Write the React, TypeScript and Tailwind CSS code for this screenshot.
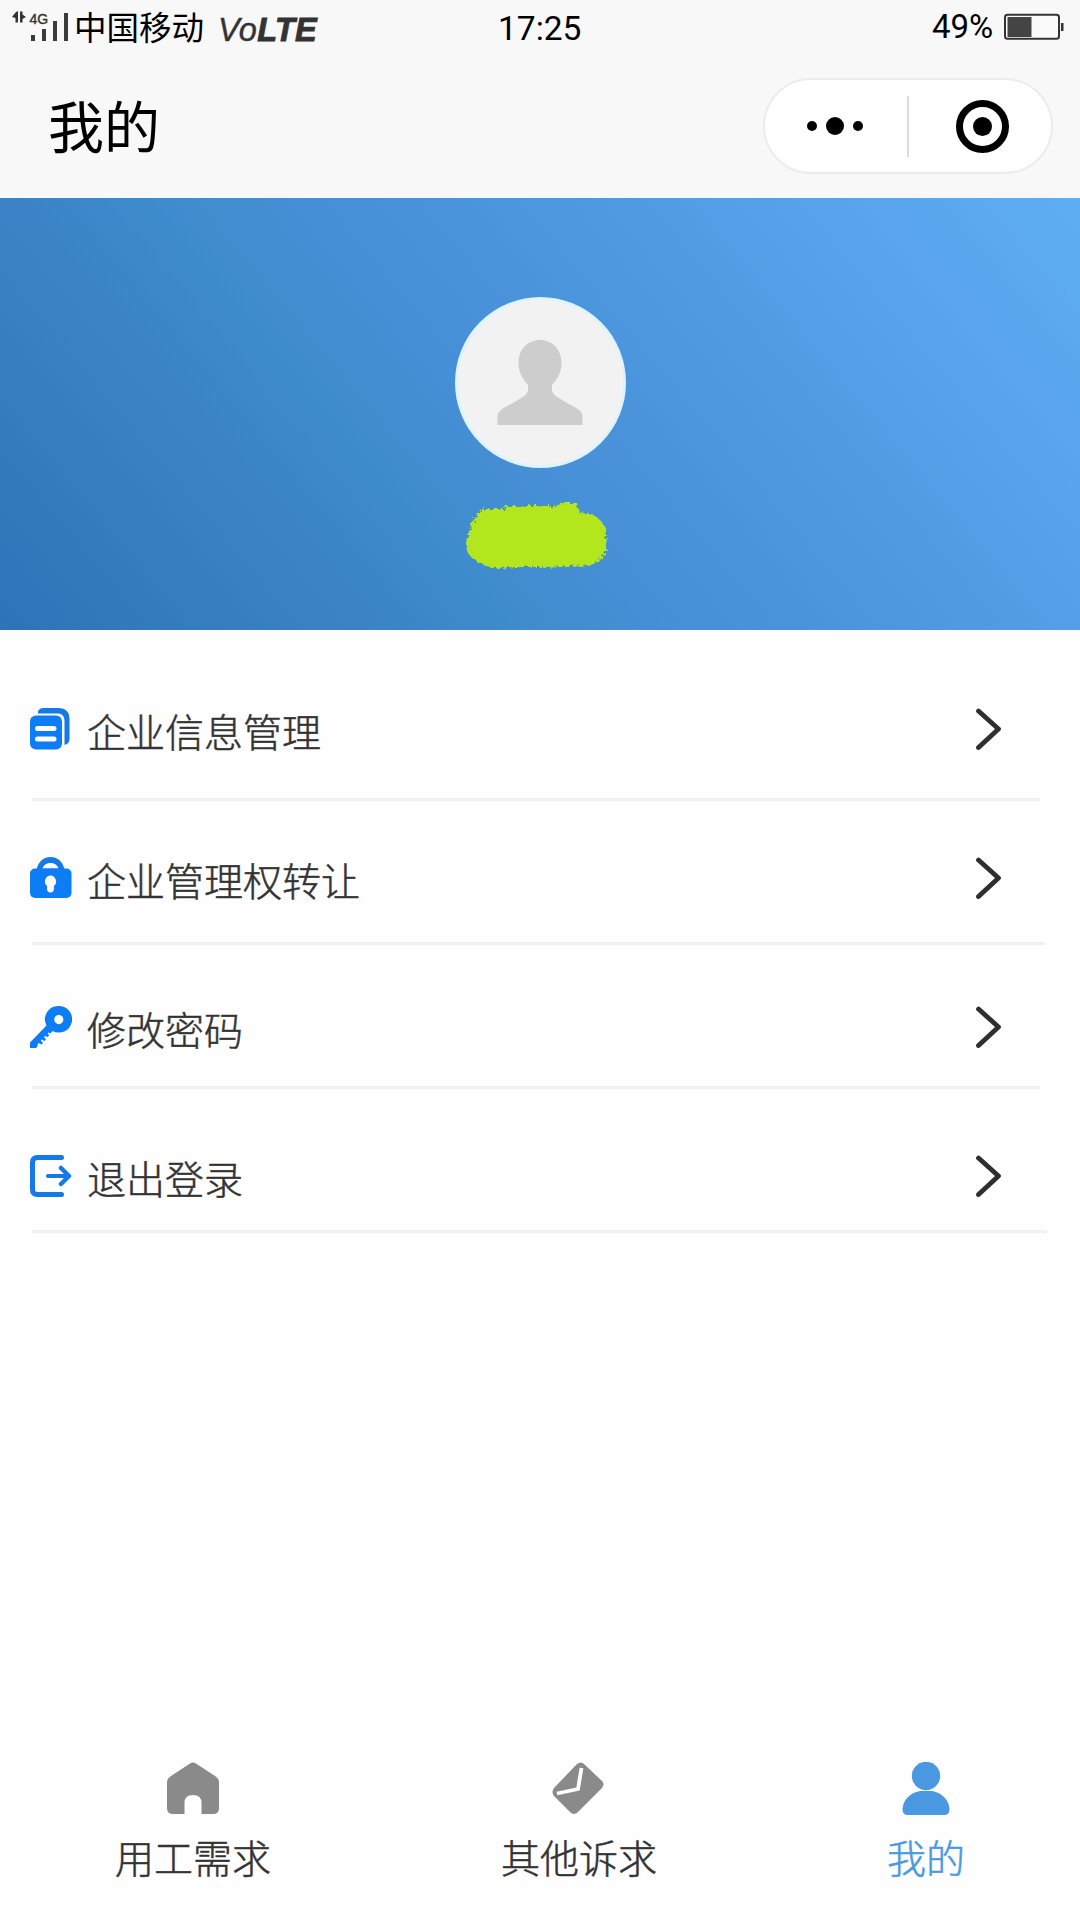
import React from "react";

const CJK = "font-['Noto_Sans_CJK_SC',sans-serif]";

function DocsIcon() {
  return (
    <svg width="42" height="44" viewBox="0 -1 42 44" fill="none" className="block">
      <path d="M8 3.500C9.500 0 12 0 15 0H28C36 0 39.500 4 39.500 11V30C39.500 34 38 36 34.500 37V13C34.500 8 32 5.500 27 5.500H8Z" fill="#1579e6" />
      <rect x="0" y="7.500" width="32" height="34" rx="6" fill="#0d7df5" />
      <path d="M7.500 20.500H24M7.500 31H24" stroke="#fff" strokeWidth="5" strokeLinecap="round" />
    </svg>
  );
}

function LockIcon() {
  return (
    <svg width="42" height="44" viewBox="0 0 42 44" fill="none" className="block">
      <path d="M6.500 14C8 5 14 1 20.500 1S33 5 34.500 14Z" fill="#1579e6" />
      <path d="M12.500 12.500C14 8.500 17 7 20.500 7S27 8.500 28.500 12.500Z" fill="#fff" />
      <rect x="0" y="12.500" width="41.500" height="29.500" rx="5" fill="#0d7df5" />
      <path d="M20.500 19.500a6 6 0 0 1 3.400 10.600V33a3.400 3.400 0 0 1-6.800 0V30.100A6 6 0 0 1 20.500 19.500Z" fill="#fff" />
    </svg>
  );
}

function KeyIcon() {
  return (
    <svg width="42" height="44" viewBox="0 0 42 44" fill="none" className="block">
      <path
        fillRule="evenodd"
        d="M28.800 1a13.300 13.300 0 1 1-6.300 25L20.500 28.500L18.500 27.500L17.700 28.300L19.200 30.300L17.500 32L15 31L14 32L16 34.500L14.500 36L11.800 34.500L10.800 35.500L13 38L11.500 39.500L8.500 38L7.500 39.500V41.500L6 43H0V37.500L16.500 20.500A13.300 13.300 0 0 1 28.800 1ZM28.800 10a4.600 4.600 0 1 0 0 9.200a4.600 4.600 0 1 0 0-9.200Z"
        fill="#0d7df5"
      />
    </svg>
  );
}

function ExitIcon() {
  return (
    <svg width="42" height="44" viewBox="0 0 42 44" fill="none" className="block" stroke="#1579e6" strokeWidth="5" strokeLinecap="round" strokeLinejoin="round">
      <path d="M31.500 3.500H7.500Q2.500 3.500 2.500 8.500V35.500Q2.500 40.500 7.500 40.500H31.500" />
      <path d="M18 22H38" strokeWidth="4" />
      <path d="M31 14L39 22L31 30" strokeWidth="4.500" />
    </svg>
  );
}

const rows = [
  { label: "企业信息管理", icon: <DocsIcon />, box: "h-[171px] pt-[77px]", line: "w-[1008px]" },
  { label: "企业管理权转让", icon: <LockIcon />, box: "h-[144px] pt-[55px]", line: "w-[1013px]" },
  { label: "修改密码", icon: <KeyIcon />, box: "h-[144px] pt-[60px]", line: "w-[1008px]" },
  { label: "退出登录", icon: <ExitIcon />, box: "h-[144px] pt-[65px]", line: "w-[1015px]" },
];

function StatusBar() {
  return (
    <div className="flex h-[56px] items-start">
      <svg width="60" height="44" viewBox="0 0 60 44" className="ml-[10px] mt-[2px] shrink-0">
        <path d="M8 9V20.500H5.500V16L2 15L5.500 10.500ZM10 9.500H12.500V12.500L16 15L12.500 17V20.500H10Z" fill="#333" />
        <text x="19.500" y="21.500" fontSize="14" fill="#333" stroke="#333" strokeWidth=".4" fontFamily="Liberation Sans">4G</text>
        <path d="M21 33h4v6h-4zM32 27h4v12h-4zM43 19h4v20h-4zM54 11h4v28h-4z" fill="#3b3b3b" />
      </svg>
      <span className={`${CJK} ml-[4px] mt-[2px] w-[131px] text-[32.500px] leading-[48px] whitespace-nowrap text-black`}>中国移动</span>
      <span className="ml-[13px] mt-[5px] w-[102px] text-[32.500px] italic leading-[50px] tracking-[0.3px] whitespace-nowrap text-[#333] [-webkit-text-stroke:0.4px_#333] font-['Liberation_Sans',sans-serif]">
        Vo<b className="[-webkit-text-stroke:0.9px_#333]">LTE</b>
      </span>
      <span className="ml-[178px] mt-[5px] w-[90px] text-[33.500px] leading-[48px] text-black font-['Roboto',sans-serif]">17:25</span>
      <span className="ml-[344px] mt-[3px] w-[66px] text-[33px] leading-[48px] text-black font-['Roboto',sans-serif]">49%</span>
      <svg width="62" height="28" viewBox="0 0 62 28" className="ml-[6px] mt-[13px] shrink-0">
        <rect x="1" y="1.800" width="54" height="24" rx="2.500" fill="#fbfbfb" stroke="#333" strokeWidth="2" />
        <path d="M3.500 4h24v20h-24z" fill="#444" />
        <path d="M57 10h2.500v8H57z" fill="#333" />
      </svg>
    </div>
  );
}

export default function App() {
  return (
    <div className={`${CJK} flex h-[1920px] w-[1080px] flex-col overflow-hidden bg-[#fefefe]`}>
      <header className="h-[198px] shrink-0 bg-[#f8f8f8]">
        <StatusBar />
        <div className="flex items-start justify-between pl-[48px] pr-[27px]">
          <h1 className="mt-[28px] text-[56px] leading-[80px] text-black">我的</h1>
          <div className="mt-[22px] flex h-[96px] w-[290px] items-center rounded-full border-2 border-[#ececec] bg-[#fefefe]">
            <div className="mt-[-1px] flex w-[140px] items-center justify-center gap-[9px]">
              <i className="size-[10px] rounded-full bg-black" />
              <i className="size-[18px] rounded-full bg-black" />
              <i className="size-[10px] rounded-full bg-black" />
            </div>
            <div className="ml-[2px] h-[61px] w-[2px] bg-[#dcdcdc]" />
            <div className="ml-[47px] flex size-[53px] items-center justify-center rounded-full border-[7px] border-black">
              <i className="size-[19px] rounded-full bg-black" />
            </div>
          </div>
        </div>
      </header>

      <section className="flex h-[432px] shrink-0 flex-col items-center bg-[linear-gradient(50deg,#2d73b9_0%,#3b82c6_25%,#3e8bcc_35%,#478fd7_47%,#4d98df_64%,#5aa5ed_86%,#5eaef3_100%)] pt-[99px]">
        <div className="flex size-[171px] items-center justify-center rounded-full border-[3px] border-[#dff4fe] bg-[#f2f2f3]">
          <svg width="86" height="86" viewBox="0 0 86 86" className="block">
            <path d="M43 0C55 0 64.500 9 64.500 23C64.500 33 60 39 55 45V51C57 56 62 58 70 63C78 67 84 70 85.500 75V85H.5V75C2 70 8 67 16 63C24 58 29 56 31 51V45C26 39 21.500 33 21.500 23C21.500 9 31 0 43 0Z" fill="#cdcdcd" />
          </svg>
        </div>
        <svg width="144" height="70" viewBox="0 0 144 70" className="mr-[8px] mt-[34px] block">
          <defs>
            <filter id="rough" x="-5%" y="-10%" width="110%" height="120%">
              <feTurbulence type="fractalNoise" baseFrequency="0.3" numOctaves="2" seed="4" />
              <feDisplacementMap in="SourceGraphic" scale="7" />
              <feGaussianBlur stdDeviation="0.5" />
            </filter>
          </defs>
          <path d="M20 7L40 7L42 4H65L90 4L101 1H113L115 11L128 12Q139 18 142 28V46Q140 59 127 63L104 64L80 65H58L30 66Q15 63 6 54Q0 46 3 36L7 24Q12 11 20 7Z" fill="#b3e61c" filter="url(#rough)" />
        </svg>
      </section>

      <main className="flex-1">
        {rows.map((r) => (
          <div key={r.label} className={`${r.box} flex flex-col justify-between`}>
            <div className="flex h-[44px] items-center pl-[30px] pr-[78px]">
              {r.icon}
              <span className="ml-[15px] mt-[2px] text-[39px] font-light leading-[44px] text-[#333] [-webkit-text-stroke:0.5px_#333]">{r.label}</span>
              <svg width="26" height="44" viewBox="0 0 26 44" fill="none" className="ml-auto block">
                <path d="M2.500 4L22.500 22L2.500 40.500" stroke="#2f2f2f" strokeWidth="4.800" strokeLinecap="round" strokeLinejoin="round" />
              </svg>
            </div>
            <div className={`${r.line} ml-[32px] h-[3px] shrink-0 bg-[#eff2f3]`} />
          </div>
        ))}
      </main>

      <nav className="flex h-[158px] shrink-0 items-start pl-[115px] text-[39px] font-light leading-[56px] text-[#333] [-webkit-text-stroke:0.5px_currentColor]">
        <div className="flex w-[156px] flex-col items-center">
          <svg width="52" height="54" viewBox="0 0 52 54" className="mr-[1px] block">
            <path d="M23 1.500Q26 -.5 29 1.500L48 14Q52 16.500 52 20V46Q52 52 46 52H34.500V41Q34.500 33 26 33T17.500 41V52H6Q0 52 0 46V20Q0 16.500 4 14Z" fill="#8a8a8a" />
          </svg>
          <span className="mt-[12px]">用工需求</span>
        </div>
        <div className="ml-[230px] flex w-[156px] flex-col items-center">
          <svg width="52" height="54" viewBox="0 0 52 54" className="mr-[2px] block">
            <path d="M25 2Q29 -1 32 2L50 19Q53 22 50 26L26 50Q22 54 18 50L2 34Q-1 30 2 26Z" fill="#8a8a8a" />
            <path d="M29.500 6L26 27L5 31.500" fill="none" stroke="#fff" strokeWidth="3.800" />
          </svg>
          <span className="mt-[12px]">其他诉求</span>
        </div>
        <div className="ml-[230px] flex w-[78px] flex-col items-center text-[#4a98e2]">
          <svg width="48" height="54" viewBox="0 0 48 54" className="block">
            <circle cx="24" cy="14" r="14.200" fill="currentColor" />
            <path d="M18 29H30C41 31 47 39 47.500 47Q47.500 53 42 53H6Q.5 53 .5 47C1 39 7 31 18 29Z" fill="currentColor" />
          </svg>
          <span className="mt-[12px]">我的</span>
        </div>
      </nav>
    </div>
  );
}
